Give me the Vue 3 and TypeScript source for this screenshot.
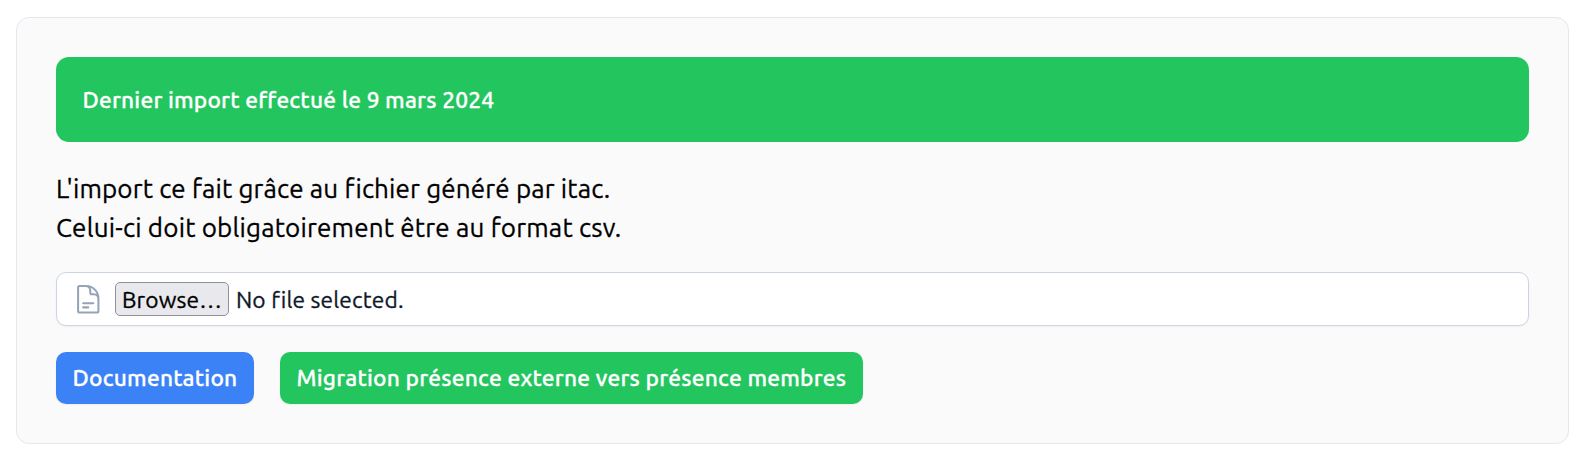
<script setup lang="ts">
const lastImport: string = '9 mars 2024'
const fileLabel: string = 'No file selected.'
</script>

<template>
  <section class="card">
    <div class="banner"><span class="banner-text">Dernier import effectué le {{ lastImport }}</span></div>
    <div class="intro">
      <p class="first">L'import ce fait grâce au fichier généré par itac.</p>
      <p class="second">Celui-ci doit obligatoirement être au format csv.</p>
    </div>
    <div class="file-field">
      <svg class="icon" viewBox="0 0 24 24" fill="none" stroke="currentColor" stroke-width="1.5" stroke-linecap="round" stroke-linejoin="round">
        <path d="M19.5 14.25v-2.625a3.375 3.375 0 0 0-3.375-3.375h-1.5A1.125 1.125 0 0 1 13.5 7.125v-1.5a3.375 3.375 0 0 0-3.375-3.375H8.25m0 12.75h7.5m-7.5 3H12M10.5 2.25H5.625c-.621 0-1.125.504-1.125 1.125v17.25c0 .621.504 1.125 1.125 1.125h12.75c.621 0 1.125-.504 1.125-1.125V11.25a9 9 0 0 0-9-9Z" />
      </svg>
      <button type="button" class="browse"><span>Browse…</span></button>
      <span class="file-name">{{ fileLabel }}</span>
    </div>
    <div class="actions">
      <button type="button" class="action doc"><span>Documentation</span></button>
      <button type="button" class="action migrate"><span>Migration présence externe vers présence membres</span></button>
    </div>
  </section>
</template>

<style>
body {
  background: #fff;
}
</style>

<style scoped>
.card {
  box-sizing: border-box;
  width: 1553px;
  height: 427px;
  margin: 17px 0 0 16px;
  padding: 39px;
  border: 1px solid #e2e8f0;
  border-radius: 13px;
  background: #fafafa;
  font-family: Ubuntu, "Noto Sans", sans-serif;
  color: #000;
}
.card span,
.card p {
  white-space: nowrap;
  -webkit-text-stroke: 0.3px currentColor;
}
.banner {
  display: flex;
  align-items: center;
  height: 85px;
  box-sizing: border-box;
  padding: 0 26px 0 26.5px;
  border-radius: 13px;
  background: #22c55e;
  color: #fff;
  font-size: 22.75px;
  font-weight: 500;
  letter-spacing: 0.18px;
}
.intro {
  margin-top: 27px;
  font-size: 26px;
  line-height: 39px;
  letter-spacing: 0.19px;
}
.intro p {
  margin: 0;
}
.intro .first {
  letter-spacing: 0.15px;
}
.file-field {
  display: flex;
  align-items: center;
  box-sizing: border-box;
  height: 54px;
  margin-top: 25px;
  padding: 0 15px;
  border: 1px solid #cbd5e1;
  border-radius: 10px;
  background: #fff;
  box-shadow: 0 1px 2px rgb(0 0 0 / 5%);
}
.icon {
  width: 32.5px;
  height: 32.5px;
  color: #94a3b8;
}
.browse {
  display: flex;
  align-items: center;
  box-sizing: border-box;
  width: 114px;
  height: 34px;
  margin: 0 0 0 10.5px;
  padding: 0 6px;
  border: 1px solid #8f8f9d;
  border-radius: 5px;
  background: #e9e9ed;
  color: #000;
  font: 400 22.75px Ubuntu, "Noto Sans", sans-serif;
  letter-spacing: 0.12px;
}
.file-name {
  margin-left: 7px;
  font-size: 22.75px;
  letter-spacing: 0.13px;
  color: #0f172a;
}
.actions {
  display: flex;
  gap: 26px;
  margin-top: 26px;
}
.action {
  display: flex;
  align-items: center;
  box-sizing: border-box;
  height: 52px;
  padding: 0 16.5px 2px;
  border: 0;
  border-radius: 10px;
  color: #fff;
  font: 500 22.75px Ubuntu, "Noto Sans", sans-serif;
  letter-spacing: 0.21px;
  box-shadow: 0 1px 2px rgb(0 0 0 / 5%);
}
.doc {
  width: 198px;
  background: #3b82f6;
}
.migrate {
  width: 583px;
  background: #22c55e;
}
</style>
